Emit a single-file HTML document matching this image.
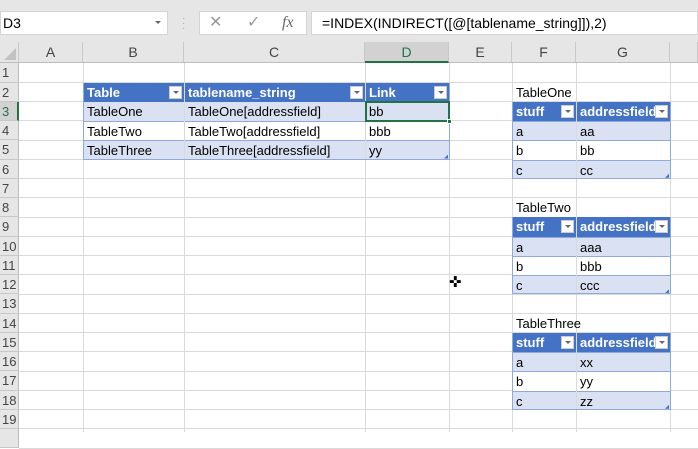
<!DOCTYPE html>
<html><head><style>
*{margin:0;padding:0;box-sizing:border-box}
body{width:698px;height:432px;overflow:hidden;background:#fff;font-family:"Liberation Sans",Calibri,sans-serif;position:relative}
.a{position:absolute}
.top{left:0;top:0;width:698px;height:42px;background:#e6e6e6}
.box{background:#fff;border:1px solid #d4d4d4}
.ch{top:42px;height:21px;background:#e6e6e6;border-right:1px solid #c8c8c8;border-bottom:1px solid #bdbdbd;text-align:center;font-size:14px;line-height:21px;color:#444}
.rh{left:0;width:19px;height:19.25px;background:#e6e6e6;border-right:1px solid #bdbdbd;border-bottom:1px solid #c8c8c8;font-size:13px;line-height:19px;color:#444;text-align:left;padding-left:2px}
.vl{top:63px;height:369px;width:1px;background:#dadada}
.hl{left:19px;width:679px;height:1px;background:#dadada}
.c{font-size:13px;line-height:19px;padding-left:3px;height:19.25px;white-space:nowrap;overflow:hidden;color:#000}
.h{background:#4472c4;color:#fff;font-weight:bold}
.b{background:#d9e1f2}
.w{background:#fff}
.bt{border-top:1px solid #8ea9db}
.dd{position:absolute;right:2px;top:3px;width:13px;height:13px;background:#fff;border:1px solid #ccc}
.dd:after{content:"";position:absolute;left:3px;top:4px;border-left:3px solid transparent;border-right:3px solid transparent;border-top:3px solid #666}
.rs{position:absolute;right:1px;bottom:1px;width:4px;height:4px;background:#4472c4;clip-path:polygon(100% 0,100% 100%,0 100%)}
</style></head><body>
<div class="a top"></div>
<div class="a box" style="left:0;top:11px;width:168px;height:24px;font-size:14px;line-height:22px;padding-left:2px">D3<span style="position:absolute;right:6px;top:9px;border-left:3px solid transparent;border-right:3px solid transparent;border-top:3px solid #666"></span></div>
<div class="a" style="left:182px;top:16px;color:#aaa;font-size:10px;line-height:5px">·<br>·<br>·</div>
<div class="a box" style="left:199px;top:11px;width:108px;height:24px;color:#999;font-size:16px;line-height:22px">
<span class="a" style="left:9px">✕</span><span class="a" style="left:47px">✓</span><span class="a" style="left:82px;font-family:'Liberation Serif',serif;font-style:italic;color:#666">fx</span></div>
<div class="a box" style="left:311px;top:11px;width:387px;height:24px;font-size:14px;line-height:22px;padding-left:10px">=INDEX(INDIRECT([@[tablename_string]]),2)</div>

<div class="a ch" style="left:0;width:19px;background:#e6e6e6"><span style="position:absolute;right:2px;bottom:2px;border-left:12px solid transparent;border-bottom:12px solid #c2c2c2"></span></div>
<div class="a ch" style="left:19px;width:64px">A</div>
<div class="a ch" style="left:83px;width:101px">B</div>
<div class="a ch" style="left:184px;width:181px">C</div>
<div class="a ch" style="left:365px;width:84px;background:#d2d2d2;color:#217346;border-bottom:2px solid #217346">D</div>
<div class="a ch" style="left:449px;width:63px">E</div>
<div class="a ch" style="left:512px;width:64px">F</div>
<div class="a ch" style="left:576px;width:94px">G</div>
<div class="a ch" style="left:670px;width:28px"></div>

<div class="a vl" style="left:83px"></div><div class="a vl" style="left:184px"></div><div class="a vl" style="left:365px"></div><div class="a vl" style="left:449px"></div><div class="a vl" style="left:512px"></div><div class="a vl" style="left:576px"></div><div class="a vl" style="left:670px"></div>

<div id="rows"></div>
<script>
var s="";for(var i=1;i<=20;i++){var t=63.3+(i-1)*19.25;
s+='<div class="a rh" style="top:'+t+'px;'+(i==3?'background:#d2d2d2;color:#217346;border-right:2px solid #217346':'')+'">'+(i<20?i:'')+'</div>';
s+='<div class="a hl" style="top:'+(t+18.5)+'px"></div>';}
document.getElementById('rows').innerHTML=s;
function R(r){return 63.3+(r-1)*19.25}
function cell(x,w,r,cls,txt,dd,rs){document.write('<div class="a c '+cls+'" style="left:'+x+'px;width:'+w+'px;top:'+R(r)+'px">'+txt+(dd?'<span class="dd"></span>':'')+(rs?'<span class="rs"></span>':'')+'</div>')}
</script>
<script>
cell(84,100,2,'h','Table',1);cell(185,180,2,'h','tablename_string',1);cell(366,83,2,'h','Link',1);
cell(84,100,3,'b','TableOne');cell(185,180,3,'b','TableOne[addressfield]');cell(366,83,3,'b','bb');
cell(84,100,4,'w bt','TableTwo');cell(185,180,4,'w bt','TableTwo[addressfield]');cell(366,83,4,'w bt','bbb');
cell(84,100,5,'b bt','TableThree');cell(185,180,5,'b bt','TableThree[addressfield]');cell(366,83,5,'b bt','yy',0,1);
var T=[[2,'TableOne',['aa','bb','cc']],[8,'TableTwo',['aaa','bbb','ccc']],[14,'TableThree',['xx','yy','zz']]];
T.forEach(function(t){var r=t[0];cell(513,160,r,'','<span style="padding-left:0">'+t[1]+'</span>');
cell(513,63,r+1,'h','stuff',1);cell(577,93,r+1,'h','addressfield',1);
['a','b','c'].forEach(function(k,i){var cl=(i%2==0?'b':'w')+' bt';cell(513,63,r+2+i,cl,k);cell(577,93,r+2+i,cl,t[2][i],0,i==2);});
document.write('<div class="a" style="left:512px;top:'+R(r+1)+'px;width:159px;height:'+(19.25*4)+'px;border:1px solid #8ea9db;border-top:none"></div>');});
document.write('<div class="a" style="left:83px;top:'+R(2)+'px;width:367px;height:'+(19.25*4)+'px;border:1px solid #8ea9db;border-top:none"></div>');
document.write('<div class="a" style="left:365px;top:'+(R(3)-1)+'px;width:85px;height:21px;border:2px solid #217346"><span style="position:absolute;right:-4px;bottom:-4px;width:5px;height:5px;background:#217346;border:1px solid #fff"></span></div>');
</script>
<div class="a" style="left:449px;top:273px;font-size:15px;color:#000">✜</div>
</body></html>
